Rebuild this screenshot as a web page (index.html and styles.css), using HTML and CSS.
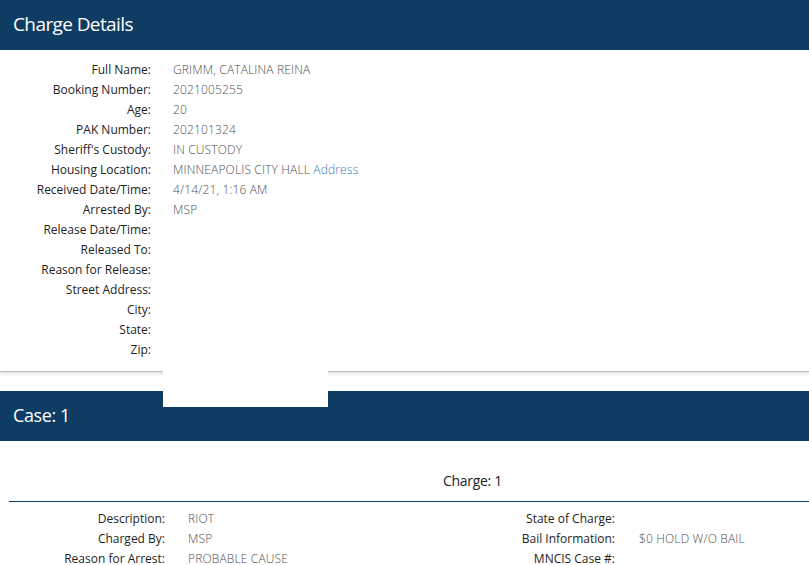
FILE: index.html
```html
<!DOCTYPE html>
<html>
<head>
<meta charset="utf-8">
<link rel="stylesheet" href="styles.css">
</head>
<body>
<div class="page">
  <section class="panel">
    <div class="bar"><h1 class="bar-title">Charge Details</h1></div>
    <div class="details">
      <div class="row"><span class="label">Full Name:</span><span class="value">GRIMM, CATALINA REINA</span></div>
      <div class="row"><span class="label">Booking Number:</span><span class="value">2021005255</span></div>
      <div class="row"><span class="label">Age:</span><span class="value">20</span></div>
      <div class="row"><span class="label">PAK Number:</span><span class="value">202101324</span></div>
      <div class="row"><span class="label">Sheriff's Custody:</span><span class="value">IN CUSTODY</span></div>
      <div class="row"><span class="label">Housing Location:</span><span class="value">MINNEAPOLIS CITY HALL <a class="link" href="#">Address</a></span></div>
      <div class="row"><span class="label">Received Date/Time:</span><span class="value">4/14/21, 1:16 AM</span></div>
      <div class="row"><span class="label">Arrested By:</span><span class="value">MSP</span></div>
      <div class="row"><span class="label">Release Date/Time:</span><span class="value"></span></div>
      <div class="row"><span class="label">Released To:</span><span class="value"></span></div>
      <div class="row"><span class="label">Reason for Release:</span><span class="value"></span></div>
      <div class="row"><span class="label">Street Address:</span><span class="value"></span></div>
      <div class="row"><span class="label">City:</span><span class="value"></span></div>
      <div class="row"><span class="label">State:</span><span class="value"></span></div>
      <div class="row"><span class="label">Zip:</span><span class="value"></span></div>
    </div>
  </section>

  <section class="panel case">
    <div class="bar case-bar"><h2 class="bar-title case-title">Case: 1</h2></div>
    <div class="charge">
      <div class="charge-head"><span class="charge-title">Charge: 1</span></div>
      <div class="charge-cols">
        <div class="col col-left">
          <div class="row"><span class="label">Description:</span><span class="value">RIOT</span></div>
          <div class="row"><span class="label">Charged By:</span><span class="value">MSP</span></div>
          <div class="row"><span class="label">Reason for Arrest:</span><span class="value">PROBABLE CAUSE</span></div>
        </div>
        <div class="col col-right">
          <div class="row"><span class="label">State of Charge:</span><span class="value"></span></div>
          <div class="row"><span class="label">Bail Information:</span><span class="value">$0 HOLD W/O BAIL</span></div>
          <div class="row"><span class="label">MNCIS Case #:</span><span class="value"></span></div>
        </div>
      </div>
    </div>
  </section>

  <div class="blank-box"></div>
</div>
</body>
</html>
```

FILE: styles.css
```css
* { box-sizing: border-box; }
html, body { margin: 0; padding: 0; background: #fff; }
body {
  font-family: "Open Sans", "Liberation Sans", sans-serif;
  font-size: 12px;
  color: #222;
  width: 809px;
  overflow: hidden;
}
.page { position: relative; }

.bar {
  background: #0f3c63;
  height: 50px;
  padding-left: 13px;
  display: flex;
  align-items: center;
}
.bar-title {
  margin: 0;
  color: #fff;
  font-weight: 400;
  font-size: 19px;
  letter-spacing: -0.6px;
  line-height: 1;
  position: relative;
  top: -1px;
}

.details {
  padding: 10px 0 11px;
  border-bottom: 1px solid #bdbdbd;
  box-shadow: 0 2px 3px rgba(0,0,0,0.12);
}
.row {
  display: grid;
  grid-template-columns: 151px 1fr;
  column-gap: 22px;
  height: 20px;
  line-height: 20px;
  white-space: nowrap;
}
.label {
  text-align: right;
  color: #1e1e1e;
  letter-spacing: 0;
}
.value {
  color: #4f4f4f;
  font-weight: 300;
  letter-spacing: 0.15px;
}
.link { color: #3a7fc1; text-decoration: none; }

.case { margin-top: 19px; }
.case-bar { height: 50px; }
.case-title { font-size: 18px; top: -1px; letter-spacing: -0.4px; }

.charge { padding: 0 0 0 9px; }
.charge-head {
  height: 61px;
  border-bottom: 1px solid #0f3c63;
  display: flex;
  align-items: center;
  padding-top: 18px;
  padding-left: 434px;
}
.charge-title { font-size: 14px; color: #222; letter-spacing: -0.3px; }

.charge-cols {
  display: grid;
  grid-template-columns: 400px 1fr;
  padding-top: 7px;
}
.col-left .row { grid-template-columns: 156px 1fr; column-gap: 23px; }
.col-right .row { grid-template-columns: 206px 1fr; column-gap: 24px; }

.blank-box {
  position: absolute;
  left: 163px;
  top: 370px;
  width: 165px;
  height: 37px;
  background: #fff;
}
```
